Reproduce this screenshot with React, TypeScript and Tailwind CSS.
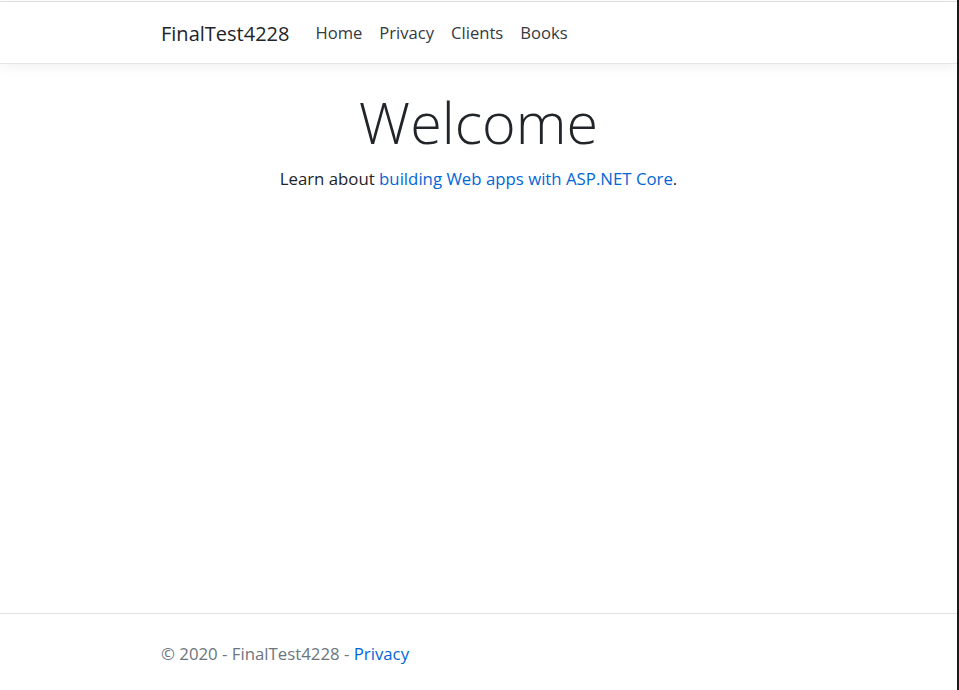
export default function App() {
  const font = { fontFamily: '"Open Sans", "Noto Sans", sans-serif' };
  return (
    <div className="flex h-[690px] w-[959px] overflow-hidden bg-white" style={font}>
      <div className="flex min-w-0 flex-1 flex-col">
        <div className="mt-px h-px bg-[#e0e0e0]" />
        <header className="relative z-10 h-[62px] border-b border-[#e5e5e5] bg-white shadow-[0_4px_12px_rgba(0,0,0,0.05)]">
          <nav className="flex h-full items-center px-[161px] pt-[2px]">
            <a className="mr-[26px] text-[20px] text-[#212529]">FinalTest4228</a>
            <ul className="flex gap-[17px] text-[16.6px] text-[#343a40]">
              <li>Home</li>
              <li>Privacy</li>
              <li>Clients</li>
              <li>Books</li>
            </ul>
          </nav>
        </header>
        <main className="flex-1 pt-[24px] text-center">
          <h1 className="text-[57.5px] font-light leading-[1.2] text-[#212529]">Welcome</h1>
          <p className="mt-[9px] text-[16.8px] text-[#212529]">
            Learn about <a className="text-[#0366d6]">building Web apps with ASP.NET Core</a>.
          </p>
        </main>
        <footer className="h-[77px] border-t border-[#dee2e6] px-[161px] pt-[27px] text-[16.8px] text-[#6c757d]">
          © 2020 - FinalTest4228 - <a className="text-[#0366d6]">Privacy</a>
        </footer>
      </div>
      <div className="w-[2px] bg-[#1b1b1b]" />
    </div>
  );
}
